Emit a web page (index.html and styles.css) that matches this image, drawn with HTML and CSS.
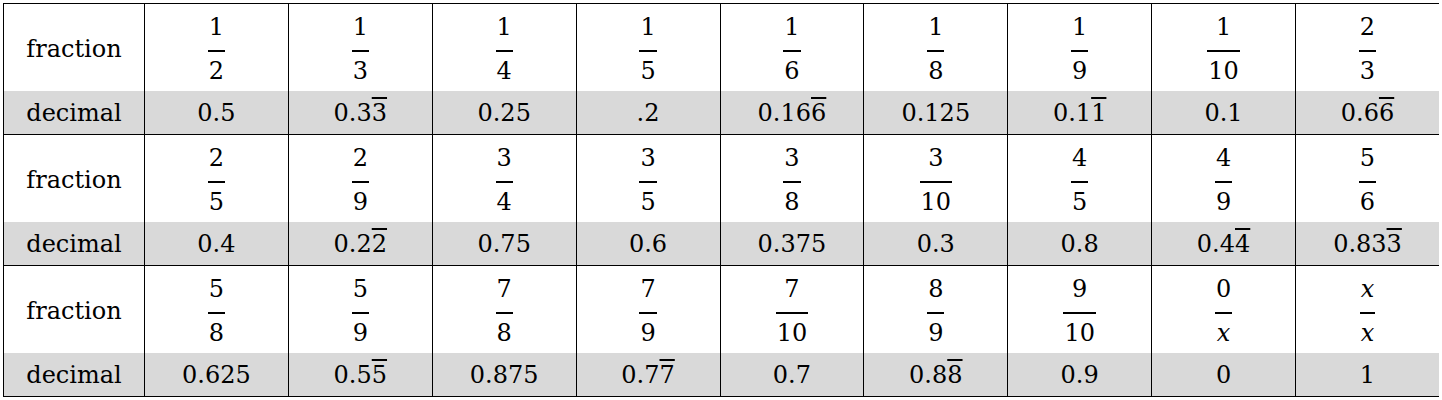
FILE: index.html
```html
<!DOCTYPE html>
<html>

<head>
    <title>Fractions and Decimals</title>
    <link rel="stylesheet" href="styles.css">
</head>

<body>
    <table class="chart">
        <tr class="fracRow">
            <th class="label">fraction</th>
            <td><span class="frac"><span class="num">1</span><span class="bar"></span><span class="den">2</span></span></td>
            <td><span class="frac"><span class="num">1</span><span class="bar"></span><span class="den">3</span></span></td>
            <td><span class="frac"><span class="num">1</span><span class="bar"></span><span class="den">4</span></span></td>
            <td><span class="frac"><span class="num">1</span><span class="bar"></span><span class="den">5</span></span></td>
            <td><span class="frac"><span class="num">1</span><span class="bar"></span><span class="den">6</span></span></td>
            <td><span class="frac"><span class="num">1</span><span class="bar"></span><span class="den">8</span></span></td>
            <td><span class="frac"><span class="num">1</span><span class="bar"></span><span class="den">9</span></span></td>
            <td><span class="frac"><span class="num">1</span><span class="bar"></span><span class="den">10</span></span></td>
            <td><span class="frac"><span class="num">2</span><span class="bar"></span><span class="den">3</span></span></td>
        </tr>
        <tr class="decRow">
            <th class="label">decimal</th>
            <td>0.5</td>
            <td>0.3<span class="rep">3</span></td>
            <td>0.25</td>
            <td>.2</td>
            <td>0.16<span class="rep">6</span></td>
            <td>0.125</td>
            <td>0.1<span class="rep">1</span></td>
            <td>0.1</td>
            <td>0.6<span class="rep">6</span></td>
        </tr>
        <tr class="fracRow">
            <th class="label">fraction</th>
            <td><span class="frac"><span class="num">2</span><span class="bar"></span><span class="den">5</span></span></td>
            <td><span class="frac"><span class="num">2</span><span class="bar"></span><span class="den">9</span></span></td>
            <td><span class="frac"><span class="num">3</span><span class="bar"></span><span class="den">4</span></span></td>
            <td><span class="frac"><span class="num">3</span><span class="bar"></span><span class="den">5</span></span></td>
            <td><span class="frac"><span class="num">3</span><span class="bar"></span><span class="den">8</span></span></td>
            <td><span class="frac"><span class="num">3</span><span class="bar"></span><span class="den">10</span></span></td>
            <td><span class="frac"><span class="num">4</span><span class="bar"></span><span class="den">5</span></span></td>
            <td><span class="frac"><span class="num">4</span><span class="bar"></span><span class="den">9</span></span></td>
            <td><span class="frac"><span class="num">5</span><span class="bar"></span><span class="den">6</span></span></td>
        </tr>
        <tr class="decRow">
            <th class="label">decimal</th>
            <td>0.4</td>
            <td>0.2<span class="rep">2</span></td>
            <td>0.75</td>
            <td>0.6</td>
            <td>0.375</td>
            <td>0.3</td>
            <td>0.8</td>
            <td>0.4<span class="rep">4</span></td>
            <td>0.83<span class="rep">3</span></td>
        </tr>
        <tr class="fracRow">
            <th class="label">fraction</th>
            <td><span class="frac"><span class="num">5</span><span class="bar"></span><span class="den">8</span></span></td>
            <td><span class="frac"><span class="num">5</span><span class="bar"></span><span class="den">9</span></span></td>
            <td><span class="frac"><span class="num">7</span><span class="bar"></span><span class="den">8</span></span></td>
            <td><span class="frac"><span class="num">7</span><span class="bar"></span><span class="den">9</span></span></td>
            <td><span class="frac"><span class="num">7</span><span class="bar"></span><span class="den">10</span></span></td>
            <td><span class="frac"><span class="num">8</span><span class="bar"></span><span class="den">9</span></span></td>
            <td><span class="frac"><span class="num">9</span><span class="bar"></span><span class="den">10</span></span></td>
            <td><span class="frac"><span class="num">0</span><span class="bar"></span><span class="den var">x</span></span></td>
            <td><span class="frac"><span class="num var">x</span><span class="bar"></span><span class="den var">x</span></span></td>
        </tr>
        <tr class="decRow">
            <th class="label">decimal</th>
            <td>0.625</td>
            <td>0.5<span class="rep">5</span></td>
            <td>0.875</td>
            <td>0.7<span class="rep">7</span></td>
            <td>0.7</td>
            <td>0.8<span class="rep">8</span></td>
            <td>0.9</td>
            <td>0</td>
            <td>1</td>
        </tr>
    </table>
</body>

</html>
```

FILE: styles.css
```css
body {
    margin: 3px;
    background-color: #fff;
    color: #000;
    font-family: 'DejaVu Serif', 'Liberation Serif', serif;
    font-size: 24px;
}

.chart {
    border-collapse: collapse;
    table-layout: fixed;
    width: 1437px;
}

.chart th,
.chart td {
    box-sizing: border-box;
    border-left: 1px solid #000;
    border-right: 1px solid #000;
    padding: 0;
    text-align: center;
    font-weight: normal;
    line-height: 24px;
}

.chart th {
    width: 141px;
}

.fracRow th,
.fracRow td {
    border-top: 1px solid #000;
    height: 87px;
}

.fracRow th {
    padding-top: 3px;
}

.decRow th,
.decRow td {
    border-bottom: 1px solid #000;
    background-color: #d9d9d9;
    height: 44px;
    padding-top: 2px;
}

.frac {
    display: inline-flex;
    flex-direction: column;
    align-items: stretch;
    vertical-align: middle;
    margin-top: 4px;
}

.frac .num,
.frac .den {
    display: block;
    padding: 0 1px;
}

.frac .bar {
    display: block;
    height: 2px;
    margin: 11px 0 7px;
    background-color: #000;
}

.var {
    font-style: italic;
}

.rep {
    text-decoration: overline;
    text-decoration-thickness: 2px;
}
```
